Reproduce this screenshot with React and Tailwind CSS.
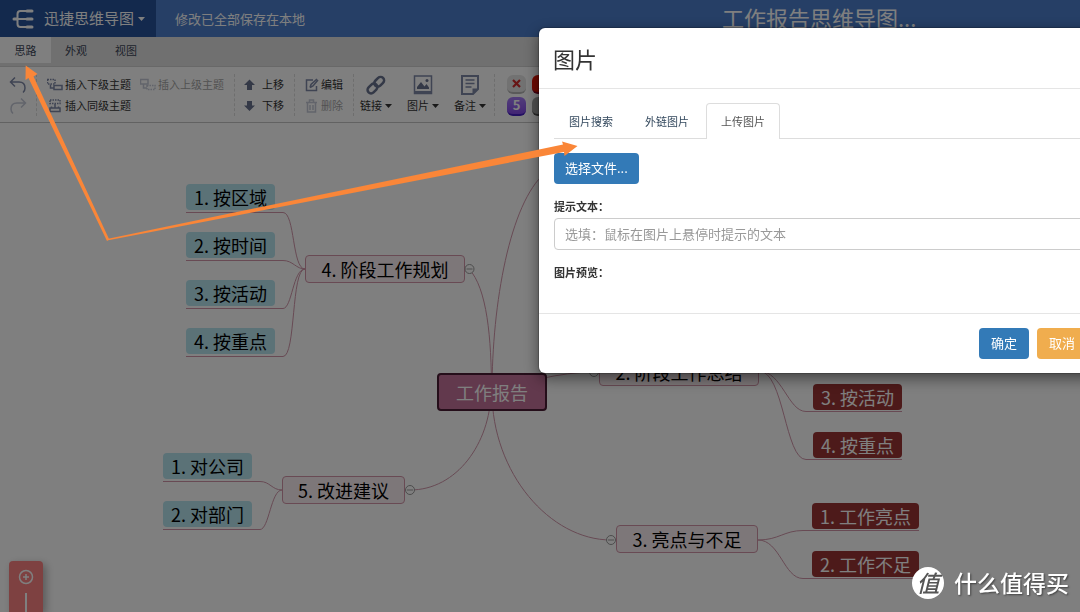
import React, { useState } from "react";

const mapNodes = [
  { text: "1. 按区域", kind: "cyan", x: 186, y: 61, w: 89 },
  { text: "2. 按时间", kind: "cyan", x: 186, y: 109, w: 89 },
  { text: "3. 按活动", kind: "cyan", x: 186, y: 157, w: 89 },
  { text: "4. 按重点", kind: "cyan", x: 186, y: 205, w: 89 },
  { text: "1. 对公司", kind: "cyan", x: 163, y: 330, w: 89 },
  { text: "2. 对部门", kind: "cyan", x: 163, y: 378, w: 89 },
  { text: "3. 按活动", kind: "red", x: 813, y: 261, w: 89 },
  { text: "4. 按重点", kind: "red", x: 813, y: 309, w: 89 },
  { text: "1. 工作亮点", kind: "red", x: 812, y: 380, w: 107 },
  { text: "2. 工作不足", kind: "red", x: 812, y: 428, w: 107 },
  { text: "4. 阶段工作规划", kind: "branch", x: 305, y: 132, w: 160 },
  { text: "5. 改进建议", kind: "branch", x: 282, y: 353, w: 123 },
  { text: "2. 阶段工作总结", kind: "branch", x: 599, y: 235, w: 160 },
  { text: "3. 亮点与不足", kind: "branch", x: 616, y: 402, w: 142 },
  { text: "工作报告", kind: "root", x: 437, y: 250, w: 110 },
];

const nodeStyles = {
  cyan: "h-[26px] rounded bg-[#b7e4ef] text-black",
  red: "h-[26px] rounded bg-[#9b3434] text-white",
  branch: "h-7 rounded-sm border border-[#d294a8] bg-[#fbeff2] text-black",
  root: "h-[38px] rounded border-2 border-[#4a1c34] bg-[#c5729a] text-white",
};

const connectors = [
  // main branches
  "M491.5 269 C491.5 215 487 165 469 146",
  "M492 269 C492 180 510 80 545 50",
  "M491 269 C490 320 457 367 410 367",
  "M492 269 C492 350 550 417 611 417",
  "M492 269 C520 260 560 249 594 249",
  // children, left side
  "M186 89.5 H283 C295 89.5 292 146 305 146",
  "M186 137.5 H283 C293 137.5 296 146 305 146",
  "M186 185.5 H283 C292 185.5 293 146 305 146",
  "M186 233.5 H283 C296 233.5 291 146 305 146",
  "M163 358.5 H260 C270 358.5 272 367 282 367",
  "M163 406.5 H260 C269 406.5 271 367 282 367",
  // children, right side
  "M902 288.5 H806 C788 288.5 782 248 759 248",
  "M902 336.5 H806 C785 336.5 784 248 759 248",
  "M919 407.5 H803 C784 407.5 779 417 758 417",
  "M919 455.5 H803 C784 455.5 780 417 758 417",
];

const toggles = [
  [469.5, 146],
  [410, 367],
  [594, 249],
  [611, 417],
];

const Icon = ({ w = 16, h = 16, children }) => (
  <svg
    width={w}
    height={h}
    viewBox={`0 0 ${w} ${h}`}
    fill="none"
    stroke="#7e88a6"
    strokeWidth="1.5"
    className="shrink-0"
    aria-hidden="true"
  >
    {children}
  </svg>
);

const Caret = () => (
  <svg width="7" height="4" viewBox="0 0 7 4" className="shrink-0" aria-hidden="true">
    <path d="M0 0h7L3.5 4z" fill="currentColor" />
  </svg>
);

const ToolButton = ({ icon, label, disabled, gap = "gap-0.5" }) => (
  <button
    disabled={disabled}
    className={`flex h-[21px] items-center whitespace-nowrap disabled:opacity-45 ${gap}`}
  >
    {icon}
    {label}
  </button>
);

const BigButton = ({ icon, label }) => (
  <button className="flex w-8 flex-col items-center whitespace-nowrap">
    <span className="flex h-[21px] items-center">{icon}</span>
    <span className="flex h-[21px] items-center gap-[3px]">
      {label}
      <Caret />
    </span>
  </button>
);

const Header = () => (
  <header className="flex h-[37px] shrink-0 items-center bg-[#4c7ecd] text-white">
    <button className="flex h-full w-[156px] shrink-0 items-center bg-[#26529a] pl-3 whitespace-nowrap">
      <svg width="22" height="20" viewBox="0 0 22 20" fill="none" stroke="#fff" strokeWidth="2" aria-hidden="true">
        <path d="M15 2H8.500Q5.500 2 5.500 5v10q0 3 3 3H15M5 10h10" />
        <path d="M15 2h5M15 10h5M15 18h5M2 10h3" strokeWidth="3" strokeLinecap="round" />
      </svg>
      <span className="ml-2.5 mr-1 text-[15px]">迅捷思维导图</span>
      <Caret />
    </button>
    <span className="flex-1 pl-[19px] text-[13px]">修改已全部保存在本地</span>
    <h1 className="w-[358px] shrink-0 self-start text-[22px] leading-[34px] whitespace-nowrap">
      工作报告思维导图...
    </h1>
  </header>
);

const Tabs = () => (
  <nav className="flex h-[30px] shrink-0 items-start border-b border-[#d0d0d0] bg-[#e1e1e1] pl-px text-[11px] text-[#3d4658]">
    <button className="-ml-px h-[26px] w-[51px] bg-white">思路</button>
    <button className="h-[26px] w-[50px]">外观</button>
    <button className="h-[26px] w-[50px]">视图</button>
  </nav>
);

const Toolbar = () => (
  <div className="flex h-14 shrink-0 items-center border-b border-[#c4c4c4] bg-white pt-px text-[11px] text-[#333]">
    <div className="flex w-[37px] shrink-0 flex-col border-r border-dashed border-[#ddd] pl-2">
      <button aria-label="撤销" className="flex h-[21px] items-center">
        <Icon w={20} h={18}>
          <path d="M7 1.500L2.500 6L7 10.500M3 6h8q6 0 6 6 0 3-2 4.500" />
        </Icon>
      </button>
      <button aria-label="重做" disabled className="flex h-[21px] items-center opacity-45">
        <Icon w={20} h={18}>
          <path d="M13 1.500L17.500 6L13 10.500M17 6H9q-6 0-6 6 0 3 2 4.500" />
        </Icon>
      </button>
    </div>

    <div className="grid shrink-0 grid-cols-[84px_84px] gap-x-[9px] border-r border-dashed border-[#ddd] pr-2.5 pl-2.5">
      <ToolButton
        label="插入下级主题"
        icon={
          <Icon>
            <path d="M0.500 2.500h7.500v4.500H0.500z" strokeDasharray="1.500 1" />
            <path d="M3.500 7.500v3.500H7M7 8.500h8v4H7z" />
          </Icon>
        }
      />
      <ToolButton
        disabled
        label="插入上级主题"
        icon={
          <Icon>
            <path d="M0.500 2.500h7.500v4.500H0.500zM3.500 7.500v3.500H7" />
            <path d="M7 8.500h8v4H7z" strokeDasharray="1.500 1" />
          </Icon>
        }
      />
      <ToolButton
        label="插入同级主题"
        icon={
          <Icon>
            <path d="M3 2h10v3.500H3z" strokeDasharray="1.500 1" />
            <path d="M8 6v3.500M4.500 8.500V10h7V8.500M3 10h10v3.500H3z" />
          </Icon>
        }
      />
    </div>

    <div className="shrink-0 border-r border-dashed border-[#ddd] pr-2.5 pl-2">
      <ToolButton
        gap="gap-1.5"
        label="上移"
        icon={
          <Icon w={13} h={12}>
            <path d="M6.500 0.500L12 6H9v5H4V6H1z" fill="#68728f" stroke="none" />
          </Icon>
        }
      />
      <ToolButton
        gap="gap-1.5"
        label="下移"
        icon={
          <Icon w={13} h={12}>
            <path d="M6.500 11L12 5.500H9V1H4v4.500H1z" fill="#68728f" stroke="none" />
          </Icon>
        }
      />
    </div>

    <div className="shrink-0 border-r border-dashed border-[#ddd] pr-2.5 pl-2.5">
      <ToolButton
        label="编辑"
        icon={
          <Icon w={14} h={14}>
            <path d="M8 2H1.500v10.500h10V8M5 9.500l1-3L12 1M5 9.500L8 8l5-6" />
          </Icon>
        }
      />
      <ToolButton
        disabled
        label="删除"
        icon={
          <Icon w={14} h={14}>
            <path d="M1 3.500h11M4.500 3V1h4v2M2.500 4v9h8V4M5 6v5M8 6v5" />
          </Icon>
        }
      />
    </div>

    <div className="flex shrink-0 gap-[15px] border-r border-dashed border-[#ddd] pr-2 pl-1.5">
      <BigButton
        label="链接"
        icon={
          <Icon w={22} h={22}>
            <g transform="rotate(-45 11 11)" stroke="#68728f" strokeWidth="2.500">
              <rect x="0.500" y="7.500" width="11" height="7" rx="3.500" />
              <rect x="10" y="7.500" width="11" height="7" rx="3.500" />
            </g>
          </Icon>
        }
      />
      <BigButton
        label="图片"
        icon={
          <Icon w={20} h={20}>
            <path d="M1.500 1h17v17.500h-17z" />
            <path d="M1 16h18v3H1z" fill="#7e88a6" stroke="none" />
            <path d="M4 14V12l4-5 3.500 4.500L13.500 9l2.500 3.500V14z" fill="#68728f" stroke="none" />
            <circle cx="14" cy="5.500" r="1.500" fill="#68728f" stroke="none" />
          </Icon>
        }
      />
      <BigButton
        label="备注"
        icon={
          <Icon w={20} h={20}>
            <path d="M2 1h16v13L13 19H2z" strokeWidth="2" />
            <path d="M5.500 5h9M5.500 8.500h9M5.500 12h6" />
            <path d="M12.500 19v-5.500H18z" fill="#7e88a6" stroke="none" />
          </Icon>
        }
      />
    </div>

    <div className="grid shrink-0 grid-cols-[19px_19px] gap-x-1.5 gap-y-[3px] pl-3 text-center text-[13px] font-bold text-white">
      <button aria-label="移除优先级" className="flex h-[19px] items-center justify-center rounded-md border-b-2 border-[#b5b5b5] bg-[#e4e4e4]">
        <svg width="9" height="9" viewBox="0 0 9 9" stroke="#d02a2a" strokeWidth="2.200" aria-hidden="true">
          <path d="M1 1l7 7M8 1L1 8" />
        </svg>
      </button>
      <button aria-label="优先级1" className="h-[19px] rounded-md border-b-2 border-[#840023] bg-[#e01200]" />
      <button className="flex h-[19px] items-center justify-center rounded-md border-b-2 border-[#4720c4] bg-linear-to-b from-[#a67cf5] to-[#8448e8]">
        5
      </button>
      <button aria-label="优先级6" className="h-[19px] rounded-md border-b-2 border-[#515151] bg-[#a3a3a3]" />
    </div>
  </div>
);

const MindMap = () => (
  <main className="relative flex-1 overflow-hidden bg-white">
    <svg className="absolute top-0 left-0" width="1080" height="489" fill="none" stroke="#d095a9" aria-hidden="true">
      {connectors.map((d) => (
        <path key={d} d={d} />
      ))}
    </svg>

    {mapNodes.map((node) => (
      <div
        key={`${node.x}-${node.y}`}
        className={`absolute flex items-center justify-center text-[18px] leading-6 whitespace-nowrap ${nodeStyles[node.kind]}`}
        style={{ left: node.x, top: node.y, width: node.w }}
      >
        {node.text}
      </div>
    ))}

    <svg className="absolute top-0 left-0" width="1080" height="489" fill="#fff" stroke="#999" aria-hidden="true">
      {toggles.map(([x, y]) => (
        <g key={x}>
          <circle cx={x} cy={y} r="4.500" />
          <path d={`M${x - 3} ${y}h6`} />
        </g>
      ))}
    </svg>

    <div className="absolute bottom-0 left-[9px] flex h-[51px] w-[34px] flex-col items-center rounded-t bg-[#fc8383] pt-2 shadow-[3px_3px_8px_rgba(0,0,0,0.3)]">
      <button aria-label="放大">
        <svg width="16" height="16" viewBox="0 0 16 16" fill="none" stroke="#fff" strokeWidth="1.500" aria-hidden="true">
          <circle cx="8" cy="8" r="6.500" />
          <path d="M8 5v6M5 8h6" />
        </svg>
      </button>
      <span className="mt-2 w-0.5 flex-1 bg-white" />
    </div>
  </main>
);

const ImageDialog = () => {
  const [tab, setTab] = useState("上传图片");
  const [hint, setHint] = useState("");

  return (
    <div className="fixed inset-0 overflow-hidden bg-black/50">
      <div
        role="dialog"
        aria-label="图片"
        className="-mr-[22px] ml-auto mt-7 w-[563px] rounded-md bg-white text-[#333] shadow-[0_5px_15px_rgba(0,0,0,0.5),0_0_1px_1px_rgba(0,0,0,0.2)]"
      >
        <h2 className="border-b border-[#e5e5e5] px-3.5 pt-3.5 pb-3.5 text-[22px] leading-8">图片</h2>

        <div className="h-[224px] px-[15px] pt-3.5">
          <div className="flex h-[36px] gap-0.5 border-b border-[#ddd] text-[11px]">
            {["图片搜索", "外链图片", "上传图片"].map((name) => (
              <button
                key={name}
                onClick={() => setTab(name)}
                className={
                  tab === name
                    ? "h-9 rounded-t border border-b-0 border-[#ddd] bg-white px-3.5 text-[#555]"
                    : "h-9 border border-transparent px-3.5 text-[#34495e]"
                }
              >
                {name}
              </button>
            ))}
          </div>

          <button className="mt-3.5 flex h-[31px] items-center rounded bg-[#337ab7] px-[11px] pb-0.5 text-[13px] text-white">
            选择文件...
          </button>

          <label htmlFor="image-hint" className="mt-3.5 block text-[11px] leading-4 font-bold">
            提示文本：
          </label>
          <input
            id="image-hint"
            type="text"
            value={hint}
            onChange={(e) => setHint(e.target.value)}
            placeholder="选填：鼠标在图片上悬停时提示的文本"
            className="mt-1 block h-8 w-full rounded border border-[#ccc] px-2.5 pb-0.5 text-[13px] placeholder:text-[#999]"
          />
          <p className="mt-3.5 text-[11px] leading-4 font-bold">图片预览：</p>
        </div>

        <div className="flex justify-end gap-2 border-t border-[#e5e5e5] px-[15px] py-3.5 text-[13px] text-white">
          <button className="h-[31px] w-[50px] rounded bg-[#337ab7] pb-0.5">确定</button>
          <button className="h-[31px] w-[50px] rounded bg-[#f0ad4e] pb-0.5">取消</button>
        </div>
      </div>
    </div>
  );
};

// Arrows pointing from the tab to the dialog
const Arrows = () => (
  <svg className="pointer-events-none fixed top-0 left-0" width="600" height="250" fill="#fa8638" aria-hidden="true">
    <path d="M107 241L28.500 78L25.500 80L25.700 65.500L37.500 74L33.500 76.500L109 239z" />
    <path d="M107 239L563 144.500L562 141.500L577.500 146L564.500 156L564 152L107 240.500z" />
  </svg>
);

const Watermark = () => (
  <div className="pointer-events-none fixed right-[11px] bottom-3 flex items-center gap-2.5 text-white">
    <span className="flex size-8 items-center justify-center rounded-full bg-white pb-0.5 text-[23px] leading-7 font-medium text-[#555] italic">
      值
    </span>
    <span className="pb-0.5 text-[23px] leading-8 font-medium [text-shadow:1px_1px_2px_rgba(0,0,0,0.5)]">
      什么值得买
    </span>
  </div>
);

const App = () => {
  return (
    <div className="flex h-screen flex-col overflow-hidden font-['Noto_Sans_CJK_SC','Noto_Sans',sans-serif]">
      <Header />
      <Tabs />
      <Toolbar />
      <MindMap />
      <ImageDialog />
      <Arrows />
      <Watermark />
    </div>
  );
};

export default App;
